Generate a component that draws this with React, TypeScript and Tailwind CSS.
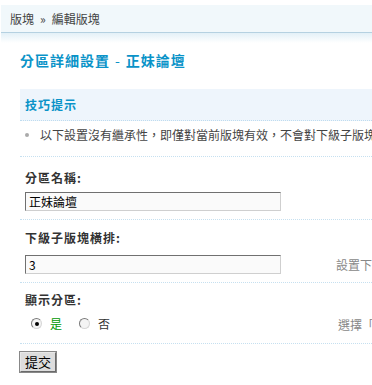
import React from "react";

function Radio({ checked }: { checked?: boolean }) {
  return (
    <span className="w-[11px] h-[11px] shrink-0 rounded-full border border-t-[#7a7a7a] border-l-[#7a7a7a] border-r-[#d6d6d6] border-b-[#d6d6d6] bg-[#f4f4f4] flex items-center justify-center">
      {checked ? <span className="w-[4px] h-[4px] rounded-full bg-black" /> : null}
    </span>
  );
}

export default function App() {
  return (
    <div
      className="w-[372px] h-[385px] overflow-hidden bg-white text-[12px] whitespace-nowrap"
      style={{ fontFamily: '"Noto Sans CJK TC", "Liberation Sans", sans-serif' }}
    >
      <div className="pt-[5px] pl-[1px]">
        <div className="h-[28px] bg-[#f1f8fb] border-b border-[#b5d1e1] flex items-center pl-[9px] text-[#444] leading-[14px]">
          <span>版塊</span>
          <span className="mx-[6px]">»</span>
          <span>編輯版塊</span>
        </div>
        <div className="h-[10px] bg-gradient-to-b from-[#e3f0f7] to-white" />
      </div>

      <div className="pl-[20px]">
        <div className="pt-[7px] mb-[19px] leading-[20px] text-[14px] font-bold text-[#0a93c8] tracking-[1px] flex items-center">
          <span>分區詳細設置</span>
          <span className="mx-[5px] font-normal">-</span>
          <span>正妹論壇</span>
        </div>

        <div className="h-[32px] bg-[#eef5fc] border-b border-dotted border-[#bfdcef] flex items-center pl-[5px] font-bold text-[#0a93c8] tracking-[1px] leading-[14px]">
          技巧提示
        </div>

        <div className="pt-[7px] pb-[14px] border-b border-dotted border-[#c6e0f0] flex items-center leading-[14px] text-[#444]">
          <span className="ml-[5px] w-[4px] h-[4px] rounded-full bg-[#aaa] shrink-0" />
          <span className="ml-[11px]">以下設置沒有繼承性，即僅對當前版塊有效，不會對下級子版塊產生影響。</span>
        </div>

        <div className="pl-[5px] pt-[14px] pb-[8px] border-b border-dotted border-[#c6e0f0]">
          <div className="leading-[14px] font-bold text-[#333] tracking-[1px]">分區名稱:</div>
          <div className="mt-[7px] flex items-center">
            <div className="w-[256px] h-[19px] shrink-0 border border-t-[#707070] border-l-[#707070] border-r-[#cfcfcf] border-b-[#cfcfcf] bg-[#fafafa] flex items-center pl-[3px] text-black leading-[14px]">
              正妹論壇
            </div>
          </div>
        </div>

        <div className="pl-[5px] pt-[11px] pb-[8px] border-b border-dotted border-[#c6e0f0]">
          <div className="leading-[14px] font-bold text-[#333] tracking-[1px]">下級子版塊橫排:</div>
          <div className="mt-[10px] flex items-center">
            <div className="w-[256px] h-[19px] shrink-0 border border-t-[#707070] border-l-[#707070] border-r-[#cfcfcf] border-b-[#cfcfcf] bg-[#fafafa] flex items-center pl-[3px] text-black leading-[14px]">
              3
            </div>
            <div className="ml-[55px] shrink-0 text-[#888] leading-[14px]">
              設置下級子版塊橫排時每行版塊數量，如果設置為 0，則按正常方式排列
            </div>
          </div>
        </div>

        <div className="pl-[5px] pt-[10px] pb-[11px] border-b border-dotted border-[#c6e0f0]">
          <div className="leading-[14px] font-bold text-[#333] tracking-[1px]">顯示分區:</div>
          <div className="mt-[8px] flex items-center leading-[14px]">
            <span className="ml-[6px]">
              <Radio checked />
            </span>
            <span className="ml-[8px] text-[#090]">是</span>
            <span className="ml-[17px]">
              <Radio />
            </span>
            <span className="ml-[8px] text-[#333]">否</span>
            <span className="ml-[228px] shrink-0 text-[#888] mt-[3px]">
              選擇「否」將暫時將分區隱藏不顯示，但分區內容仍將保留
            </span>
          </div>
        </div>

        <div className="mt-[8px] flex">
          <div className="w-[36px] h-[20px] border border-t-[#e8e8e8] border-l-[#e8e8e8] border-r-[#6a6a6a] border-b-[#6a6a6a] bg-[#ddd] flex items-center justify-center text-[13px] text-black leading-[14px] outline outline-1 outline-[#888]">
            提交
          </div>
        </div>
      </div>
    </div>
  );
}
